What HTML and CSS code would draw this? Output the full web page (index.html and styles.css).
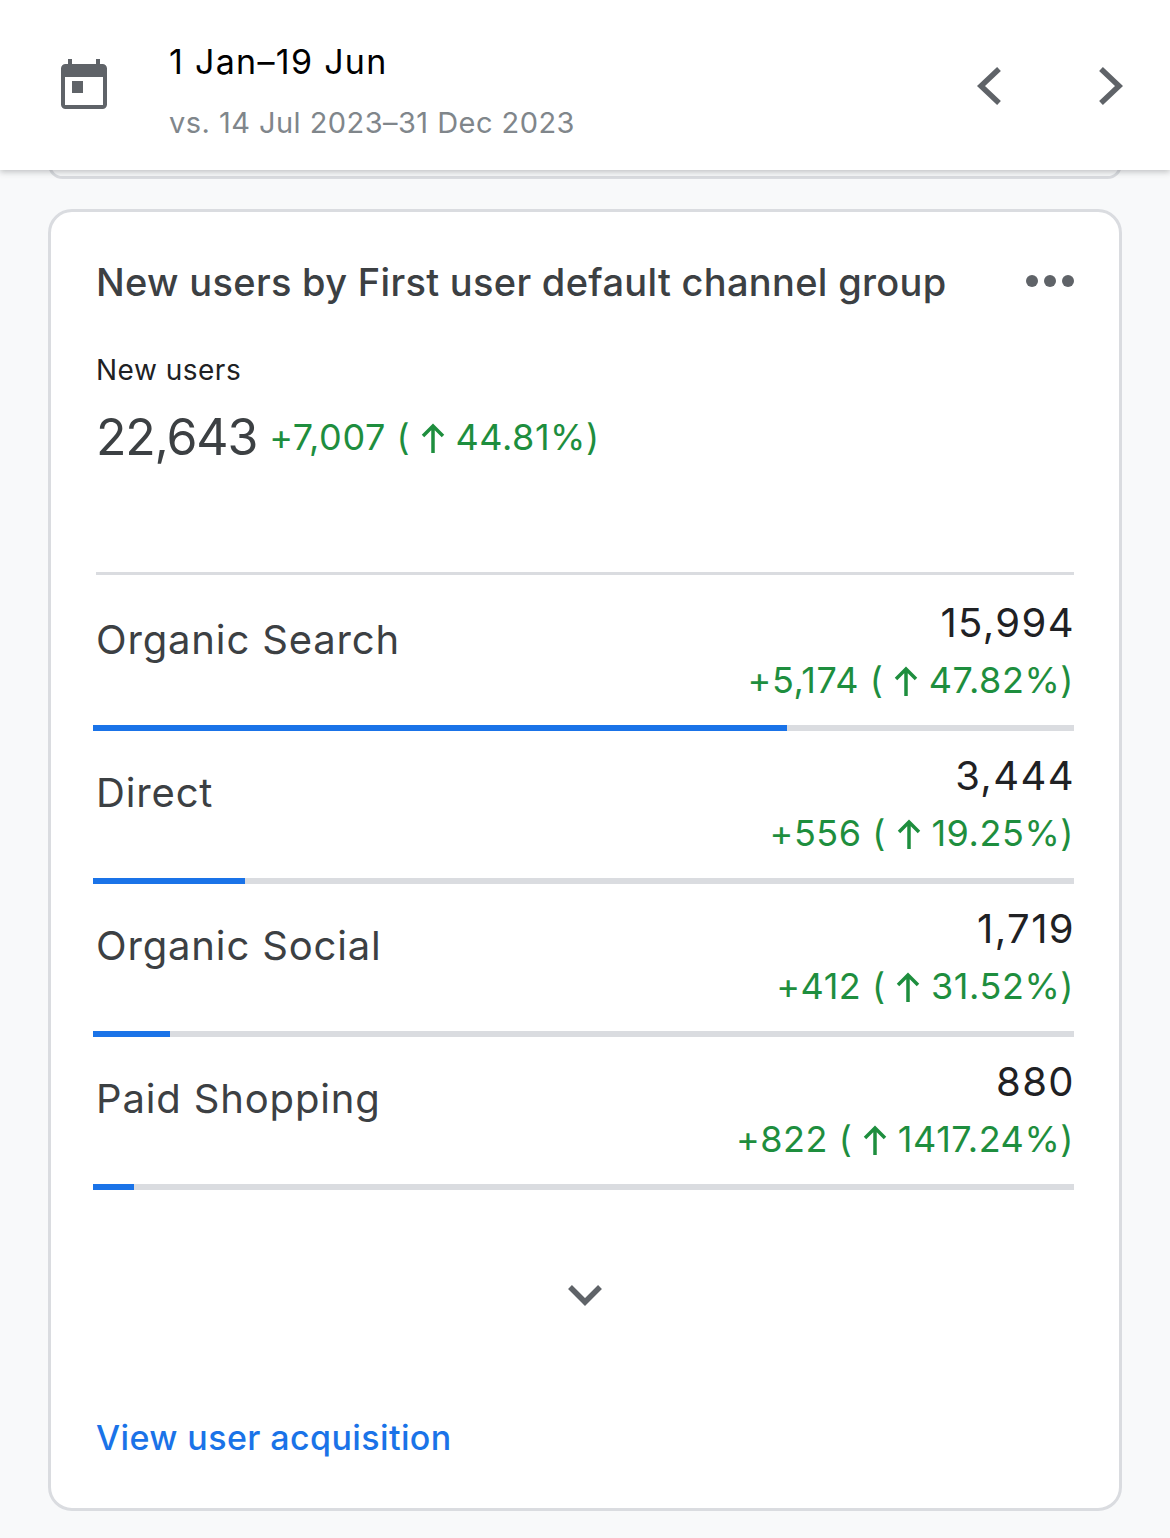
FILE: index.html
```html
<!DOCTYPE html>
<html lang="en">
<head>
<meta charset="utf-8">
<title>New users</title>
<link rel="stylesheet" href="styles.css">
</head>
<body>
<header class="topbar">
  <svg class="cal" viewBox="0 0 46 50" aria-hidden="true"><path fill-rule="evenodd" d="M7 0h4v5h24V0h4v5h2.500A4.500 4.500 0 0 1 46 9.500v36a4.500 4.500 0 0 1-4.500 4.500h-37A4.500 4.500 0 0 1 0 45.500v-36A4.500 4.500 0 0 1 4.500 5H7zM4 18v28h38V18z"/><rect x="11" y="22" width="11" height="12"/></svg>
  <div class="dates">
    <div class="range">1 Jan–19 Jun</div>
    <div class="compare">vs. 14 Jul 2023–31 Dec 2023</div>
  </div>
  <svg class="nav nav-prev" viewBox="0 0 26 40" aria-hidden="true"><path d="M23 3 5 20l18 17"/></svg>
  <svg class="nav" viewBox="0 0 26 40" aria-hidden="true"><path d="M3 3l18 17L3 37"/></svg>
</header>
<div class="prev-card"></div>
<main class="card">
  <div class="card-head">
    <h2 class="title">New users by First user default channel group</h2>
    <div class="dots"><i></i><i></i><i></i></div>
  </div>
  <div class="label">New users</div>
  <div class="total">
    <span class="total-num">22,643</span>
    <span class="delta">+7,007 ( <svg class="up" viewBox="0 0 24 30" aria-hidden="true"><path d="M12 30V3M2 13 12 3l10 10"/></svg> 44.81%)</span>
  </div>
  <div class="rows">
    <div class="row">
      <div class="row-main">
        <div class="name">Organic Search</div>
        <div class="vals"><div class="val">15,994</div><div class="delta">+5,174 ( <svg class="up" viewBox="0 0 24 30" aria-hidden="true"><path d="M12 30V3M2 13 12 3l10 10"/></svg> 47.82%)</div></div>
      </div>
      <div class="track"><div class="fill" style="width:694px"></div></div>
    </div>
    <div class="row">
      <div class="row-main">
        <div class="name">Direct</div>
        <div class="vals"><div class="val">3,444</div><div class="delta">+556 ( <svg class="up" viewBox="0 0 24 30" aria-hidden="true"><path d="M12 30V3M2 13 12 3l10 10"/></svg> 19.25%)</div></div>
      </div>
      <div class="track"><div class="fill" style="width:152px"></div></div>
    </div>
    <div class="row">
      <div class="row-main">
        <div class="name">Organic Social</div>
        <div class="vals"><div class="val">1,719</div><div class="delta">+412 ( <svg class="up" viewBox="0 0 24 30" aria-hidden="true"><path d="M12 30V3M2 13 12 3l10 10"/></svg> 31.52%)</div></div>
      </div>
      <div class="track"><div class="fill" style="width:77px"></div></div>
    </div>
    <div class="row">
      <div class="row-main">
        <div class="name">Paid Shopping</div>
        <div class="vals"><div class="val">880</div><div class="delta">+822 ( <svg class="up" viewBox="0 0 24 30" aria-hidden="true"><path d="M12 30V3M2 13 12 3l10 10"/></svg> 1417.24%)</div></div>
      </div>
      <div class="track"><div class="fill" style="width:41px"></div></div>
    </div>
  </div>
  <div class="expand"><svg viewBox="0 0 36 24" aria-hidden="true"><path d="M3 4l15 15L33 4"/></svg></div>
  <a class="link" href="#">View user acquisition</a>
</main>
</body>
</html>
```
FILE: styles.css
```css
* { box-sizing: border-box; }
html, body { margin: 0; padding: 0; }
body {
  width: 1170px;
  height: 1538px;
  overflow: hidden;
  background: #f8f9fa;
  font-family: "Inter", "Roboto", sans-serif;
  color: #202124;
}
.topbar {
  position: relative;
  z-index: 2;
  height: 170px;
  background: #fff;
  box-shadow: 0 2px 6px rgba(60, 64, 67, .3);
  display: flex;
  align-items: flex-start;
  padding-left: 61px;
}
.cal { width: 46px; height: 50px; margin-top: 59px; fill: #5f6368; flex: none; }
.dates { margin-left: 62px; width: 807px; flex: none; }
.range { margin-top: 41px; font-size: 34px; line-height: 42px; color: #000; letter-spacing: 1.3px; }
.compare { margin-top: 20px; font-size: 29px; line-height: 40px; color: #80868b; letter-spacing: .45px; }
.nav { width: 26px; height: 40px; margin-top: 66px; flex: none; fill: none; stroke: #5f6368; stroke-width: 5.5; }
.nav-prev { margin-right: 96px; }
.prev-card {
  height: 29px;
  margin: -20px 48px 0;
  border: 3px solid #dadce0;
  border-radius: 32px;
}
.card {
  margin: 30px 48px 0;
  height: 1302px;
  background: #fff;
  border: 3px solid #dadce0;
  border-radius: 24px;
  padding: 0 45px;
}
.card-head { display: flex; justify-content: space-between; height: 140px; }
.title {
  margin: 47px 0 0;
  font-size: 38px;
  line-height: 46px;
  font-weight: 500;
  color: #3c4043;
  letter-spacing: .31px;
}
.dots { display: flex; gap: 6px; margin-top: 63px; }
.dots i { width: 12px; height: 12px; border-radius: 50%; background: #5f6368; }
.label { font-size: 28px; line-height: 36px; letter-spacing: .5px; color: #202124; }
.total { display: flex; align-items: center; gap: 12px; margin-top: 21px; height: 56px; }
.total-num { font-size: 50px; line-height: 56px; color: #3c4043; letter-spacing: -1.2px; }
.delta { font-size: 36px; line-height: 40px; color: #1e8e3e; white-space: nowrap; letter-spacing: .55px; }
.up { width: 24px; height: 30px; fill: none; stroke: #1e8e3e; stroke-width: 3.5; vertical-align: -3px; }
.rows { margin-top: 107px; border-top: 3px solid #dadce0; }
.row { height: 153px; display: flex; flex-direction: column; }
.row:first-child { height: 159px; margin-top: -3px; }
.row-main { flex: 1; display: flex; justify-content: space-between; align-items: flex-start; }
.row:first-child .row-main { padding-top: 6px; }
.name { margin-top: 37px; font-size: 40px; line-height: 50px; color: #3c4043; letter-spacing: .85px; }
.vals { text-align: right; }
.val { margin: 20px -1px 0 0; font-size: 40px; line-height: 50px; color: #202124; letter-spacing: 1.4px; }
.vals .delta { margin-top: 12px; }
.track { height: 6px; margin-left: -3px; background: #dadce0; flex: none; }
.fill { height: 6px; background: #1a73e8; }
.expand { margin-top: 93px; height: 28px; display: flex; justify-content: center; margin-left: -1px; }
.expand svg { width: 36px; height: 24px; fill: none; stroke: #5f6368; stroke-width: 5.5; }
.link {
  display: block;
  margin-top: 105px;
  font-size: 34px;
  line-height: 44px;
  font-weight: 450;
  color: #1a73e8;
  text-decoration: none;
  letter-spacing: .4px;
}
```
